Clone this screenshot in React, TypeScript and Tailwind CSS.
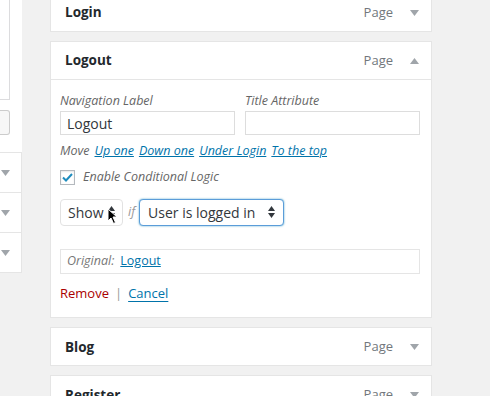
import React from "react"

const font = { fontFamily: '"Open Sans", "Noto Sans", Arial, sans-serif' }

function Caret({ up = false }: { up?: boolean }) {
  return (
    <svg width="9" height="6" viewBox="0 0 9 6" className="text-[#a0a5aa]">
      {up ? <path d="M0 6 L4.5 0 L9 6 Z" fill="currentColor" /> : <path d="M0 0 L4.5 6 L9 0 Z" fill="currentColor" />}
    </svg>
  )
}

function UpDown() {
  return (
    <svg width="7" height="12" viewBox="0 0 7 12" className="text-[#32373c]">
      <path d="M0 5 L3.5 0 L7 5 Z" fill="currentColor" />
      <path d="M0 7 L3.5 12 L7 7 Z" fill="currentColor" />
    </svg>
  )
}

function ItemBar({ title, open = false }: { title: string; open?: boolean }) {
  return (
    <div className="flex h-[37px] items-center justify-between pl-[14px] pr-[12px]">
      <span className="text-[13.5px] font-bold text-[#23282d]">{title}</span>
      <span className="flex items-center gap-[17px] text-[13px] text-[#72777c]">
        Page
        <Caret up={open} />
      </span>
    </div>
  )
}

export default function App() {
  return (
    <div className="flex h-[396px] w-[490px] overflow-hidden bg-[#f1f1f1]" style={font}>
      {/* left panel */}
      <div className="flex w-[22px] flex-col">
        <div className="flex flex-col bg-white pr-px">
          <div className="h-[100px] w-[10px] border-r border-b border-[#dcdcde]" />
          <div className="mt-[10px] h-[25px] w-[10px] rounded-r-[3px] border border-l-0 border-[#ccc] bg-[#f7f7f7]" />
          <div className="h-[17px]" />
        </div>
        <div className="flex flex-col border-r border-[#e5e5e5] bg-white">
          {[0, 1, 2].map((i) => (
            <div key={i} className="flex h-[40px] items-center border-t border-[#e5e5e5] pl-[1px]">
              <Caret />
            </div>
          ))}
          <div className="border-t border-[#e5e5e5]" />
        </div>
      </div>

      {/* main column */}
      <div className="ml-[28px] mt-[-7px] flex w-[382px] flex-col gap-[9px]">
        <div className="border border-[#e5e5e5] bg-white">
          <ItemBar title="Login" />
        </div>

        <div className="border border-[#e5e5e5] bg-white">
          <ItemBar title="Logout" open />
          <div className="border-t border-[#e5e5e5] pb-[14px] pl-[9px] pr-[11px] pt-[12px]">
            <div className="flex gap-[10px]">
              <label className="flex w-[175px] flex-col">
                <span className="text-[12.5px] italic leading-[17px] text-[#666]">Navigation Label</span>
                <div className="mt-[2px] flex h-[24px] items-center border border-[#ddd] px-[6px] text-[14px] text-[#32373c]">
                  Logout
                </div>
              </label>
              <label className="flex flex-1 flex-col">
                <span className="text-[12.5px] italic leading-[17px] text-[#666]">Title Attribute</span>
                <div className="mt-[2px] h-[24px] border border-[#ddd]" />
              </label>
            </div>

            <div className="mt-[7px] flex items-center gap-[5px] text-[12.5px] italic leading-[18px]">
              <span className="text-[#666]">Move</span>
              <span className="text-[#0073aa] underline">Up one</span>
              <span className="text-[#0073aa] underline">Down one</span>
              <span className="text-[#0073aa] underline">Under Login</span>
              <span className="text-[#0073aa] underline">To the top</span>
            </div>

            <div className="mt-[8px] flex items-center gap-[8px]">
              <div className="flex h-[15px] w-[15px] items-center justify-center border border-[#b4b9be] bg-white shadow-[inset_0_1px_2px_rgba(0,0,0,0.1)]">
                <svg width="11" height="9" viewBox="0 0 11 9">
                  <path d="M1 4.5 L4 7.5 L10 1" stroke="#1e8cbe" strokeWidth="2" fill="none" />
                </svg>
              </div>
              <span className="text-[12.5px] italic text-[#666]">Enable Conditional Logic</span>
            </div>

            <div className="mt-[12px] flex items-center">
              <div className="relative flex h-[27px] w-[63px] items-center justify-between rounded-[4px] border border-[#e2e2e2] bg-white pl-[7px] pr-[7px] text-[14px] text-[#32373c]">
                Show
                <UpDown />
                <svg width="11" height="17" viewBox="0 0 11 17" className="absolute left-[46px] top-[8px]">
                  <path d="M1 1 L1 13 L4 10 L6.5 15.5 L8.5 14.5 L6 9 L10 9 Z" fill="#000" stroke="#fff" strokeWidth="1" />
                </svg>
              </div>
              <span className="ml-[5px] mr-[4px] text-[12.5px] italic text-[#999]">if</span>
              <div className="flex h-[27px] w-[145px] items-center justify-between rounded-[4px] border border-[#5b9dd9] bg-white pl-[8px] pr-[8px] text-[14px] text-[#32373c] shadow-[0_0_2px_rgba(30,140,190,0.8)]">
                User is logged in
                <UpDown />
              </div>
            </div>

            <div className="mt-[23px] flex h-[25px] items-center gap-[6px] border border-[#e5e5e5] px-[6px] text-[12.5px]">
              <span className="italic text-[#777]">Original:</span>
              <span className="text-[#0073aa] underline">Logout</span>
            </div>

            <div className="mt-[10px] flex items-center gap-[6px] text-[13px]">
              <span className="text-[#a00]">Remove</span>
              <span className="text-[#999]">|</span>
              <span className="text-[#0073aa] underline underline-offset-[3px]">Cancel</span>
            </div>
          </div>
        </div>

        <div className="border border-[#e5e5e5] bg-white">
          <ItemBar title="Blog" />
        </div>
        <div className="border border-[#e5e5e5] bg-white">
          <ItemBar title="Register" />
        </div>
      </div>
    </div>
  )
}
